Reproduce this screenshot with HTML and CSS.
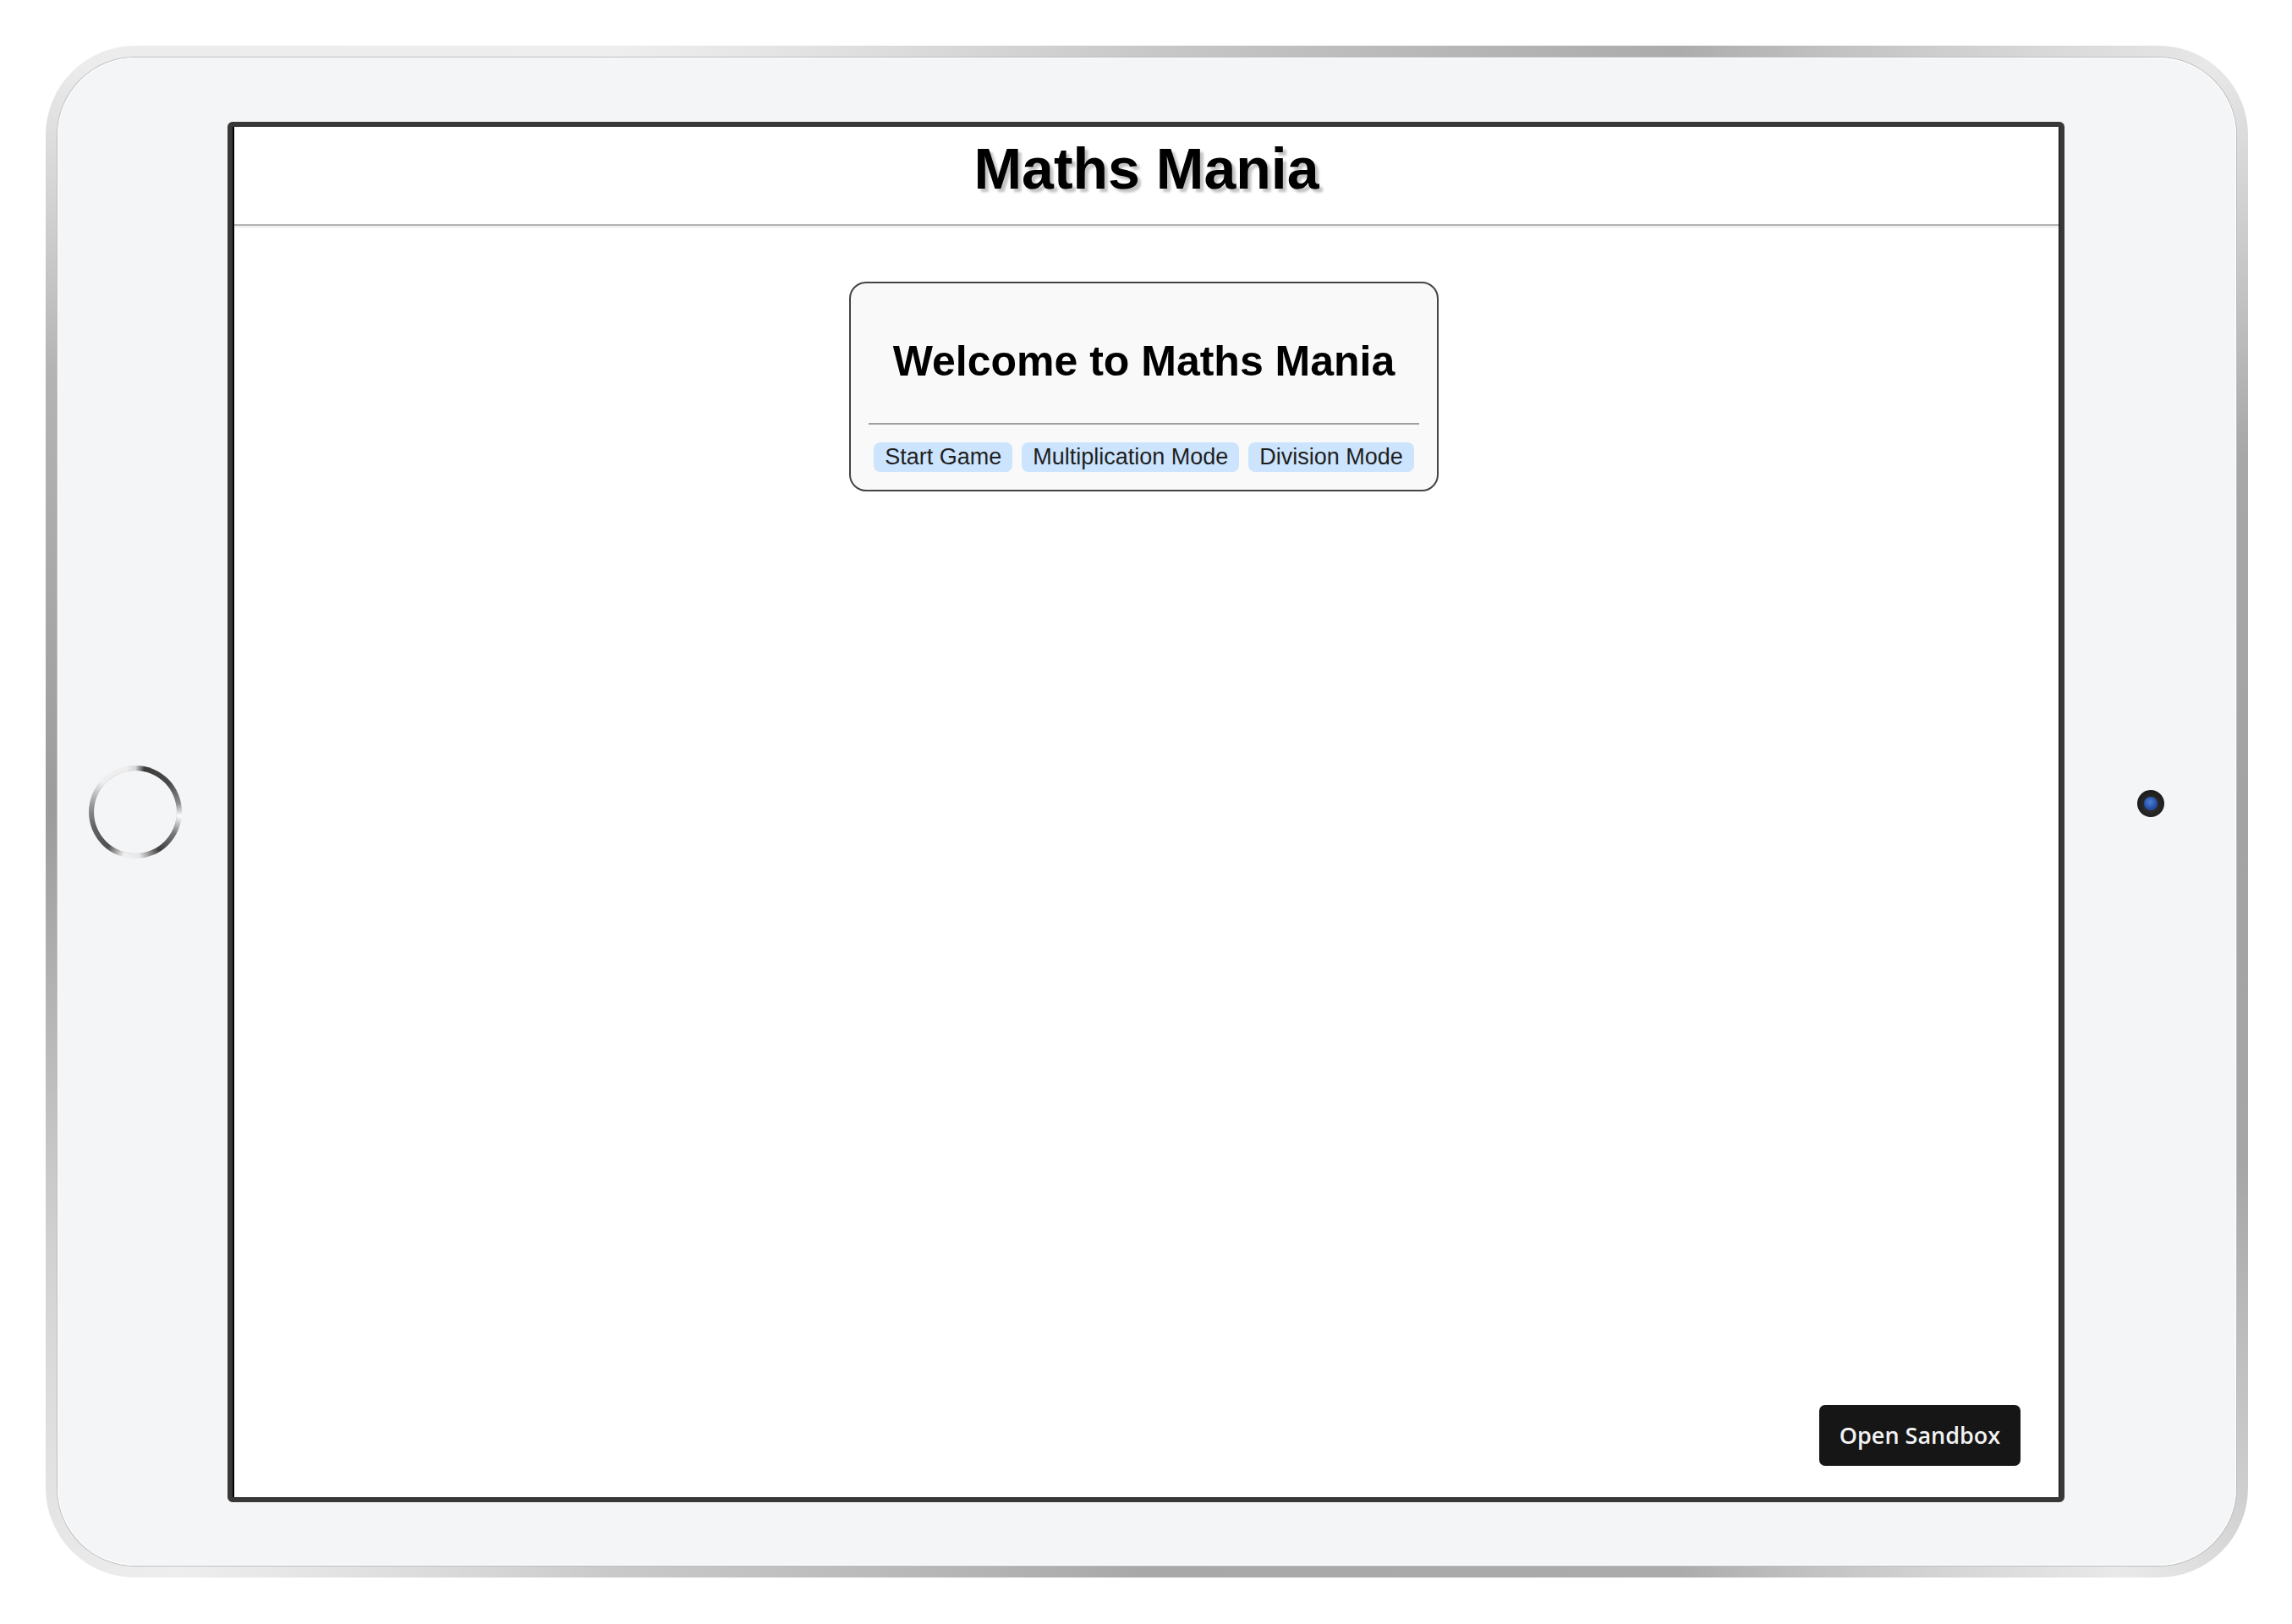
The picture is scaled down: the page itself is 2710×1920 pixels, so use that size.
FILE: index.html
```html
<!DOCTYPE html>
<html lang="en">
<head>
<meta charset="utf-8">
<title>Maths Mania</title>
<link rel="stylesheet" href="styles.css">
</head>
<body>
<div class="device">
  <div class="device-inner">
    <div class="side side-left">
      <div class="home-button"></div>
    </div>
    <div class="screen">
      <div class="app">
        <header class="app-header">
          <h1 class="app-title">Maths Mania</h1>
        </header>
        <main class="app-main">
          <section class="welcome-card">
            <h2 class="welcome-title">Welcome to Maths Mania</h2>
            <hr class="welcome-rule">
            <div class="mode-row">
              <button class="mode-btn">Start Game</button>
              <button class="mode-btn">Multiplication Mode</button>
              <button class="mode-btn">Division Mode</button>
            </div>
          </section>
        </main>
        <button class="sandbox-btn">Open Sandbox</button>
      </div>
    </div>
    <div class="side side-right">
      <div class="camera"><div class="camera-lens"></div></div>
    </div>
  </div>
</div>
</body>
</html>
```

FILE: styles.css
```css
html, body {
  margin: 0;
  padding: 0;
  background: #ffffff;
}

body {
  padding: 54px 0 0 54px;
  font-family: "Liberation Sans", Arial, sans-serif;
}

.device {
  width: 2604px;
  height: 1811px;
  box-sizing: border-box;
  padding: 14px;
  border-radius: 106px;
  background: conic-gradient(from 0deg,
    #c8c8c8 0deg,
    #acacac 35deg,
    #e8e8e8 55deg,
    #a7a7a7 72deg,
    #a3a3a3 90deg,
    #a6a6a6 108deg,
    #cfcfcf 122deg,
    #e9e9e9 128deg,
    #ababab 145deg,
    #a8a8a8 180deg,
    #c9c9c9 215deg,
    #eeeeee 232deg,
    #d2d2d2 248deg,
    #9c9c9c 270deg,
    #b4b4b4 292deg,
    #ececec 305deg,
    #eeeeee 325deg,
    #c8c8c8 360deg);
}

.device-inner {
  height: 100%;
  border-radius: 92px;
  background: #f4f5f7;
  box-shadow: 0 0 0 1px #bcbcbc, inset 0 0 0 1px #ffffff;
  display: grid;
  grid-template-columns: 201px 2172px 1fr;
  align-items: center;
}

.side {
  display: flex;
  align-items: center;
}

.side-left {
  padding-left: 37px;
}

.side-right {
  padding-left: 86px;
  padding-bottom: 19px;
}

.home-button {
  position: relative;
  width: 110px;
  height: 110px;
  border-radius: 50%;
  background: conic-gradient(from 0deg,
    #d8d8d8 0deg,
    #3c3c3c 12deg,
    #4a4a4a 50deg,
    #8a8a8a 78deg,
    #ffffff 95deg,
    #7a7a7a 118deg,
    #3f3f3f 148deg,
    #e8e8e8 175deg,
    #f0f0f0 195deg,
    #505050 218deg,
    #626262 250deg,
    #9a9a9a 280deg,
    #efefef 312deg,
    #eeeeee 348deg,
    #d8d8d8 360deg);
}

.home-button::after {
  content: "";
  position: absolute;
  inset: 6px;
  border-radius: 50%;
  background: #f4f5f7;
  box-shadow: 0 0 1px rgba(0,0,0,0.25);
}

.camera {
  width: 32px;
  height: 32px;
  border-radius: 50%;
  background: radial-gradient(circle at 50% 55%, #3a3a3a 0%, #222222 55%, #111111 100%);
  display: flex;
  align-items: center;
  justify-content: center;
}

.camera-lens {
  width: 16px;
  height: 16px;
  border-radius: 50%;
  background: radial-gradient(circle at 45% 40%, #4f7fd6 0%, #2b56ae 50%, #1a3475 100%);
}

.screen {
  width: 2172px;
  height: 1632px;
  box-sizing: border-box;
  border: 6px solid #383838;
  border-radius: 6px;
  background: #ffffff;
}

.app {
  position: relative;
  height: 100%;
  box-sizing: border-box;
  border-left: 2px solid #000000;
  border-right: 1px solid #111111;
  background: #ffffff;
}

.app-header {
  box-sizing: border-box;
  height: 117px;
  padding-top: 10px;
  border-bottom: 2px solid #b3b3b3;
  box-shadow: 0 2px 2px rgba(0,0,0,0.08);
  text-align: center;
}

.app-title {
  margin: 0;
  font-family: "Liberation Sans", Arial, sans-serif;
  font-weight: 700;
  font-size: 68px;
  line-height: 78px;
  color: #000000;
  text-shadow: 4px 4px 3px #c2c2c2;
}

.app-main {
  display: flex;
  justify-content: center;
  padding-top: 66px;
  padding-right: 6px;
}

.welcome-card {
  width: 697px;
  box-sizing: border-box;
  border: 2px solid #444444;
  border-radius: 20px;
  background: #f9f9f9;
  padding: 63px 21px 21px;
  text-align: center;
}

.welcome-title {
  margin: 0;
  font-family: "Liberation Sans", Arial, sans-serif;
  font-weight: 700;
  font-size: 50px;
  line-height: 58px;
  color: #000000;
}

.welcome-rule {
  margin: 44px 0 0;
  border: 0;
  height: 2px;
  background: #9e9e9e;
}

.mode-row {
  margin-top: 21px;
  display: flex;
  justify-content: center;
  gap: 11px;
}

.mode-btn {
  margin: 0;
  border: 0;
  border-radius: 8px;
  padding: 2px 13px;
  background: #cce4fd;
  font-family: "Liberation Sans", Arial, sans-serif;
  font-size: 27px;
  line-height: 31px;
  color: #1f1f1f;
}

.sandbox-btn {
  position: absolute;
  right: 45px;
  bottom: 37px;
  width: 238px;
  height: 72px;
  border: 0;
  border-radius: 7px;
  background: #161616;
  color: #f2f2f2;
  font-family: "Open Sans", "Noto Sans", sans-serif;
  font-weight: 600;
  font-size: 27px;
  padding: 0;
}
```
